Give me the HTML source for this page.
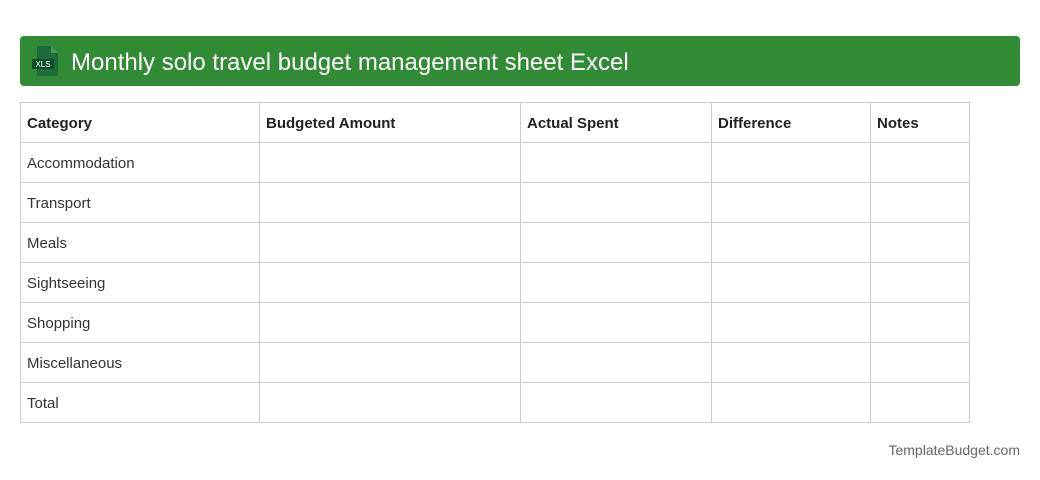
<!DOCTYPE html>
<html><head><style>
body{margin:0;width:1040px;height:480px;background:#fff;font-family:"Liberation Sans",sans-serif;position:relative}
.hdr{position:absolute;left:20px;top:36px;width:1000px;height:50px;background:#318a34;border-radius:4px}
.hdr .t{position:absolute;left:51px;top:13px;color:#fff;font-size:24px;line-height:28px}
table{position:absolute;left:20px;top:102px;border-collapse:collapse;font-size:15px;color:#333}
td{border:1px solid #ccc;height:38px;padding:1px 6px 0;vertical-align:middle}
tr:first-child td{font-weight:bold;color:#222}
.ft{position:absolute;right:20px;top:442px;font-size:14px;color:#666}
</style></head><body>
<div class="hdr">
<svg style="position:absolute;left:11px;top:10px" width="30" height="30" viewBox="0 0 30 30">
<path d="M6 0h14l7 7v23H6z" fill="#1e6b3a"/><path d="M20 0v7h7z" fill="#4a9a60"/>
<rect x="1" y="13" width="22" height="10" fill="#0f4d28"/>
<text x="12" y="21" font-size="8" fill="#fff" text-anchor="middle" font-family="Liberation Sans">XLS</text>
</svg>
<div class="t">Monthly solo travel budget management sheet Excel</div>
</div>
<table>
<tr><td style="width:226px">Category</td><td style="width:248px">Budgeted Amount</td><td style="width:178px">Actual Spent</td><td style="width:146px">Difference</td><td style="width:86px">Notes</td></tr>
<tr><td>Accommodation</td><td></td><td></td><td></td><td></td></tr>
<tr><td>Transport</td><td></td><td></td><td></td><td></td></tr>
<tr><td>Meals</td><td></td><td></td><td></td><td></td></tr>
<tr><td>Sightseeing</td><td></td><td></td><td></td><td></td></tr>
<tr><td>Shopping</td><td></td><td></td><td></td><td></td></tr>
<tr><td>Miscellaneous</td><td></td><td></td><td></td><td></td></tr>
<tr><td>Total</td><td></td><td></td><td></td><td></td></tr>
</table>
<div class="ft">TemplateBudget.com</div>
</body></html>
